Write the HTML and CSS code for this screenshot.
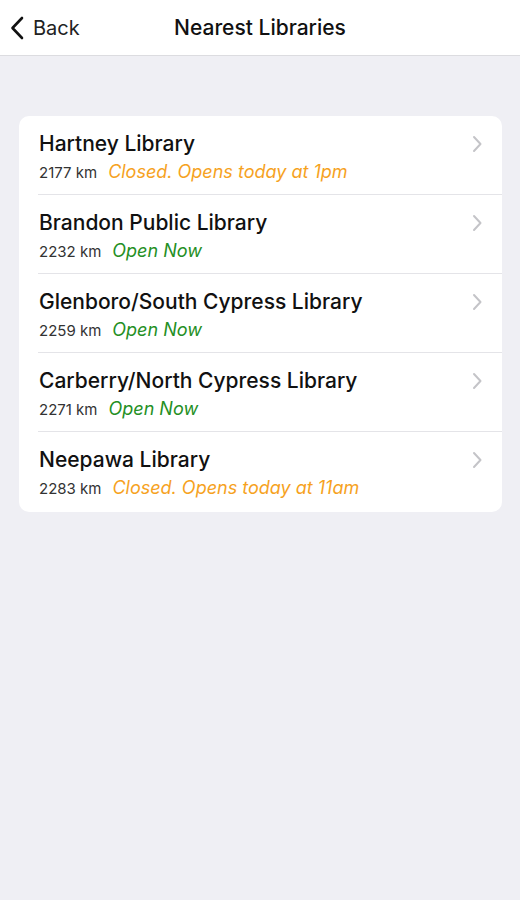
FILE: index.html
```html
<!DOCTYPE html>
<html lang="en">
<head>
    <meta charset="UTF-8">
    <meta name="viewport" content="width=device-width, initial-scale=1.0">
    <title>Nearest Libraries</title>
    <link rel="stylesheet" href="styles.css">
</head>
<body>
    <header class="navbar">
        <a class="back" href="#">
            <svg class="back-icon" width="14" height="24" viewBox="0 0 14 24"><path d="M12 2 L2.5 12 L12 22" fill="none" stroke="#111" stroke-width="2.6" stroke-linecap="round" stroke-linejoin="round"/></svg>
            <span>Back</span>
        </a>
        <h1 class="title">Nearest Libraries</h1>
    </header>

    <main class="content">
        <ul class="list">
            <li class="row">
                <div class="row-text">
                    <div class="name">Hartney Library</div>
                    <div class="meta"><span class="dist">2177 km</span><span class="status closed">Closed. Opens today at 1pm</span></div>
                </div>
                <svg class="chev" width="12" height="18" viewBox="0 0 12 18"><path d="M3 2 L9.5 9 L3 16" fill="none" stroke="#c4c4c8" stroke-width="2" stroke-linecap="round" stroke-linejoin="round"/></svg>
            </li>
            <li class="row">
                <div class="row-text">
                    <div class="name">Brandon Public Library</div>
                    <div class="meta"><span class="dist">2232 km</span><span class="status open">Open Now</span></div>
                </div>
                <svg class="chev" width="12" height="18" viewBox="0 0 12 18"><path d="M3 2 L9.5 9 L3 16" fill="none" stroke="#c4c4c8" stroke-width="2" stroke-linecap="round" stroke-linejoin="round"/></svg>
            </li>
            <li class="row">
                <div class="row-text">
                    <div class="name">Glenboro/South Cypress Library</div>
                    <div class="meta"><span class="dist">2259 km</span><span class="status open">Open Now</span></div>
                </div>
                <svg class="chev" width="12" height="18" viewBox="0 0 12 18"><path d="M3 2 L9.5 9 L3 16" fill="none" stroke="#c4c4c8" stroke-width="2" stroke-linecap="round" stroke-linejoin="round"/></svg>
            </li>
            <li class="row">
                <div class="row-text">
                    <div class="name">Carberry/North Cypress Library</div>
                    <div class="meta"><span class="dist">2271 km</span><span class="status open">Open Now</span></div>
                </div>
                <svg class="chev" width="12" height="18" viewBox="0 0 12 18"><path d="M3 2 L9.5 9 L3 16" fill="none" stroke="#c4c4c8" stroke-width="2" stroke-linecap="round" stroke-linejoin="round"/></svg>
            </li>
            <li class="row">
                <div class="row-text">
                    <div class="name">Neepawa Library</div>
                    <div class="meta"><span class="dist">2283 km</span><span class="status closed">Closed. Opens today at 11am</span></div>
                </div>
                <svg class="chev" width="12" height="18" viewBox="0 0 12 18"><path d="M3 2 L9.5 9 L3 16" fill="none" stroke="#c4c4c8" stroke-width="2" stroke-linecap="round" stroke-linejoin="round"/></svg>
            </li>
        </ul>
    </main>
</body>
</html>
```

FILE: styles.css
```css
body {
    font-family: Inter, "Open Sans", "Liberation Sans", sans-serif;
    margin: 0;
    padding: 0;
    background-color: #efeff4;
    color: #111;
    min-height: 900px;
}

.navbar {
    height: 55px;
    background-color: #fff;
    border-bottom: 1px solid #dcdce0;
    display: flex;
    align-items: center;
    justify-content: center;
    position: relative;
}

.back {
    position: absolute;
    left: 10px;
    top: 0;
    height: 55px;
    display: flex;
    align-items: center;
    gap: 9px;
    color: #222;
    text-decoration: none;
    font-size: 20px;
}

.title {
    margin: 0;
    font-size: 21px;
    font-weight: 500;
    color: #111;
}

.content {
    padding: 60px 18px 0 19px;
}

.list {
    list-style: none;
    margin: 0;
    padding: 0;
    background-color: #fff;
    border-radius: 10px;
    overflow: hidden;
}

.row {
    display: flex;
    align-items: flex-start;
    height: 79px;
    box-sizing: border-box;
    padding: 15px 19px 0 20px;
}

.row:last-child {
    height: 80px;
}

/* separator starts under the text, runs to the card edge */
.row:not(:last-child) {
    background-image: linear-gradient(#e4e4e8, #e4e4e8);
    background-size: calc(100% - 19px) 1px;
    background-position: right bottom;
    background-repeat: no-repeat;
}

.row-text {
    flex: 1;
}

.chev {
    margin-top: 4px;
}

.name {
    font-size: 21px;
    font-weight: 500;
    line-height: 26px;
    height: 26px;
    color: #111;
}

.meta {
    margin-top: 4px;
    height: 22px;
    line-height: 22px;
    display: flex;
    align-items: baseline;
    gap: 11px;
}

.dist {
    font-size: 15px;
    color: #333;
}

.status {
    font-size: 18px;
    font-style: italic;
}

.closed {
    color: #f6a21e;
}

.open {
    color: #248f24;
}
```
